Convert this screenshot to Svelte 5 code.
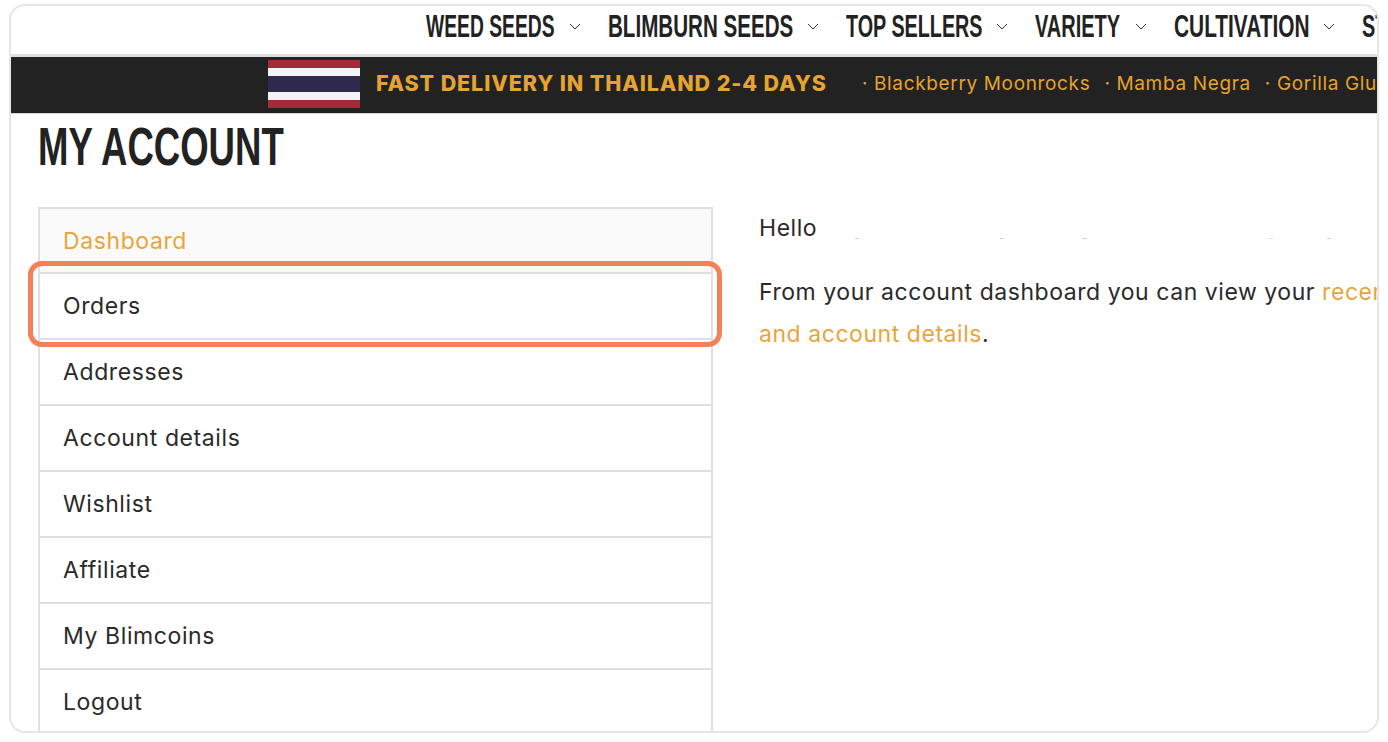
<script lang="ts">
  // no Oswald here, so the labels get squeezed to the width they have in the design
  const navItems = [
    { label: "WEED SEEDS", w: 129, sx: 0.632 },
    { label: "BLIMBURN SEEDS", w: 185, sx: 0.675 },
    { label: "TOP SELLERS", w: 136, sx: 0.648 },
    { label: "VARIETY", w: 86, sx: 0.654 },
    { label: "CULTIVATION", w: 135, sx: 0.684 },
    { label: "STORE", w: 70, sx: 0.65 }
  ];
  const menu = ["Dashboard", "Orders", "Addresses", "Account details", "Wishlist", "Affiliate", "My Blimcoins", "Logout"];
  const strains = ["Blackberry Moonrocks", "Mamba Negra", "Gorilla Glue"];
  // faint leftovers of the blurred-out name
  const specks = [
    { gap: 38, color: "#cfcfcf" },
    { gap: 141, color: "#cfcfcf" },
    { gap: 79, color: "#cfcfcf" },
    { gap: 182, color: "#f6d9b8" },
    { gap: 54, color: "#cfcfcf" }
  ];
</script>

<div class="frame">
  <nav class="topnav">
    {#each navItems as item}
      <a class="navItem" href="#top">
        <span class="navLabel" style="width: {item.w}px">
          <span class="squeeze" style="transform: scaleX({item.sx})">{item.label}</span>
        </span>
        <svg class="chev" width="12" height="7" viewBox="0 0 12 7"><path d="M1 1l5 5 5-5" fill="none" stroke="#333" stroke-width="1" /></svg>
      </a>
    {/each}
  </nav>

  <div class="promo">
    <svg class="flag" width="92" height="48" viewBox="0 0 92 48">
      <rect width="92" height="48" fill="#a32a38" />
      <rect y="8" width="92" height="32" fill="#f4f4f8" />
      <rect y="16" width="92" height="16" fill="#2d2a4e" />
    </svg>
    <strong class="promoText">FAST DELIVERY IN THAILAND 2-4 DAYS</strong>
    <div class="strains">
      {#each strains as s}
        <span>· {s}</span>
      {/each}
    </div>
  </div>

  <main class="page">
    <h1><span>MY ACCOUNT</span></h1>
    <div class="columns">
      <ul class="sidemenu">
        {#each menu as m, i}
          <li class:active={i === 0}>
            <span>{m}</span>
            {#if i === 1}<div class="highlight"></div>{/if}
          </li>
        {/each}
      </ul>
      <section class="content">
        <p class="hello">
          <span>Hello</span>
          <span class="specks">
            {#each specks as s}
              <i style="margin-left: {s.gap}px; background: {s.color}"></i>
            {/each}
          </span>
        </p>
        <p class="intro">From your account dashboard you can view your <a href="#top">recent orders, manage your shipping and billing addresses,</a><br /><a href="#top">and account details</a>.</p>
      </section>
    </div>
  </main>
</div>

<style>
  :global(body) {
    margin: 0;
    background: #fff;
  }

  .frame {
    box-sizing: border-box;
    width: 1370px;
    height: 729px;
    margin: 4px 0 0 9px;
    border: 2px solid #e5e5ec;
    border-radius: 16px;
    overflow: hidden;
    background: #fff;
    font-family: Inter, "Open Sans", "Liberation Sans", sans-serif;
  }

  .topnav {
    display: flex;
    align-items: center;
    box-sizing: border-box;
    height: 51px;
    padding: 0 0 8px 415px;
    border-bottom: 3px solid #dfdfe1;
    white-space: nowrap;
    overflow: hidden;
  }
  .navItem {
    display: flex;
    flex: none;
    align-items: center;
    gap: 14px;
    margin-right: 27px;
    color: #222;
    text-decoration: none;
  }
  .navLabel {
    display: block;
    flex: none;
    font-family: "Liberation Sans", sans-serif;
    font-size: 30.5px;
    font-weight: 700;
    line-height: 40px;
  }
  .squeeze {
    display: inline-block;
    transform-origin: left center;
  }
  .chev {
    flex: none;
  }

  .promo {
    display: flex;
    align-items: center;
    box-sizing: border-box;
    height: 57px;
    padding: 0 0 4px 257px;
    background: #222;
    border-bottom: 1px solid #d4d4d6;
    color: #e5a32f;
    white-space: nowrap;
    overflow: hidden;
  }
  .flag {
    flex: none;
    margin: 2px 16px 0 0;
  }
  .promoText {
    font-size: 21.5px;
    font-weight: 800;
    letter-spacing: 0.9px;
    margin-right: 35px;
  }
  .strains {
    display: flex;
    gap: 14px;
    font-size: 19px;
    letter-spacing: 0.65px;
  }

  .page {
    padding-left: 27px;
  }
  h1 {
    box-sizing: border-box;
    height: 93px;
    margin: 0;
    padding-top: 5px;
    font-family: "Liberation Sans", sans-serif;
    font-size: 54px;
    font-weight: 700;
    line-height: 54px;
    color: #222;
  }
  h1 span {
    display: inline-block;
    transform: scaleX(0.677);
    transform-origin: left center;
  }

  .columns {
    display: flex;
    gap: 46px;
  }

  .sidemenu {
    flex: none;
    box-sizing: border-box;
    width: 675px;
    margin: 0;
    padding: 0;
    list-style: none;
    border: solid #e0e0e0;
    border-width: 2px 2px 0 2px;
  }
  .sidemenu li {
    position: relative;
    box-sizing: border-box;
    height: 66px;
    padding-left: 23px;
    line-height: 64px;
    font-size: 23px;
    letter-spacing: 0.6px;
    color: #2a2a2a;
    border-bottom: 2px solid #e0e0e0;
  }
  .sidemenu li:last-child {
    border-bottom: none;
  }
  .sidemenu li.active {
    height: 65px;
    background: #fafafa;
    color: #e8a53a;
  }
  .highlight {
    position: absolute;
    left: -12px;
    top: -13px;
    box-sizing: border-box;
    width: 694px;
    height: 86px;
    border: 5px solid #f4805a;
    border-radius: 14px;
  }

  .content {
    flex: none;
    width: 640px;
    color: #2a2a2a;
    font-size: 23px;
    letter-spacing: 0.55px;
    white-space: nowrap;
  }
  .content p {
    margin: 0;
  }
  .hello {
    display: flex;
    height: 64px;
    line-height: 42px;
  }
  .specks {
    display: flex;
    align-items: flex-start;
    padding-top: 31px;
  }
  .specks i {
    display: block;
    width: 4px;
    height: 1px;
  }
  .intro {
    line-height: 42px;
  }
  .intro a {
    color: #e8a53a;
    text-decoration: none;
  }
</style>
